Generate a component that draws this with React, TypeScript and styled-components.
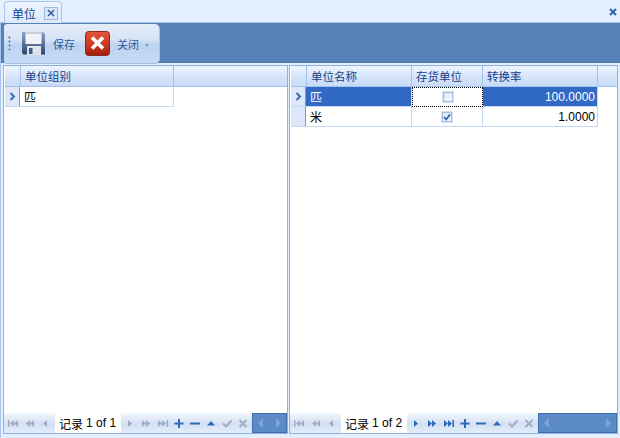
import React from "react";
import styled, { createGlobalStyle } from "styled-components";

const Global = createGlobalStyle`
  html, body { margin: 0; padding: 0; width: 620px; height: 438px; overflow: hidden; background: #e3efff; }
  body { font-family: "Liberation Sans", "Noto Sans CJK SC", sans-serif; font-size: 12px; color: #000; }
  * { box-sizing: border-box; }
`;

const Page = styled.div`
  width: 620px; height: 438px; display: flex; flex-direction: column; background: #e3efff;
`;
const TabStrip = styled.div`
  height: 23px; display: flex; align-items: flex-end; justify-content: space-between;
  padding: 0 3px 0 4px; background: #e4efff; border-bottom: 1px solid #a9c6ec;
`;
const Tab = styled.div`
  width: 58px; height: 22px; margin-bottom: -1px; display: flex; align-items: center; gap: 8px; padding: 1px 0 0 7px;
  border: 1px solid #a9c6ec; border-bottom: none; border-radius: 4px 4px 0 0;
  background: linear-gradient(#edf4ff, #dde9fb); color: #15428b; position: relative;
`;
const TabClose = styled.div`
  width: 14px; height: 13px; border: 1px solid #9db9dd; background: #dbe7f8;
  display: flex; align-items: center; justify-content: center;
`;
const StripClose = styled.div`
  width: 8px; height: 8px; margin-bottom: 6px; display: flex;
`;
const Body = styled.div`
  flex: 1; display: flex; flex-direction: column; padding: 0 2px 4px 2px; border-left: 1px solid #a9c6ec; min-height: 0;
`;
const Band = styled.div`
  height: 40px; margin: 0 -2px 0 -2px; padding: 1px 0 0 3px; background: #5680b8; border-bottom: 1px solid #4c75ac;
  display: flex;
`;
const ToolBar = styled.div`
  width: 156px; height: 40px; border-radius: 3px 5px 5px 3px; display: flex; align-items: center;
  background: linear-gradient(#e4edf9 0%, #d6e3f6 40%, #bdd3f0 55%, #c9dcf6 100%);
  border-right: 1px solid #a9c3e6; border-bottom: 1px solid #9ebde4; position: relative; z-index: 1;
`;
const Grip = styled.div`
  width: 3px; height: 15px; margin: 0 10px 0 4px;
  background: radial-gradient(circle at 1.5px 1.5px, #7f9cc6 1.2px, transparent 1.4px) 0 0 / 3px 4px repeat-y;
`;
const ToolLabel = styled.span<{ $w: number; $pad: number }>`
  color: #2b5a99; width: ${p => p.$w}px; padding-left: ${p => p.$pad}px; font-size: 11px; white-space: nowrap;
`;
const Arrow = styled.div`
  width: 0; height: 0; margin-top: 3px; border-left: 2.5px solid transparent; border-right: 2.5px solid transparent;
  border-top: 3px solid #7f9cc6;
`;
const Panes = styled.div`
  flex: 1; display: flex; min-height: 0; padding-top: 2px; gap: 1px;
`;
const Pane = styled.div<{ $w: number }>`
  width: ${p => p.$w}px; display: flex; flex-direction: column; border: 1px solid #8fb2df; background: #fff;
`;
const Grid = styled.div`
  flex: 1; display: flex; flex-direction: column; padding: 0 0 0 1px; min-height: 0;
`;
const Row = styled.div`
  display: flex; height: 20px;
`;
const HeadRow = styled(Row)`
  height: 21px; background: linear-gradient(#eef5ff, #d5e4fa 55%, #c8dbf7);
  border-bottom: 1px solid #a5c3ea;
`;
const HeadCell = styled.div<{ $w?: number }>`
  ${p => (p.$w ? `width:${p.$w}px;` : "flex:1;")}
  padding: 0 0 0 4px; border-right: 1px solid #a5c3ea; display: flex; align-items: center; color: #15428b; font-size: 11.5px;
  &:last-child { border-right: none; }
`;
const Indicator = styled.div`
  width: 15px; flex: none; border-right: 1px solid #7f9db9; border-bottom: 1px solid #c6d9f3;
  background: #dce8f9; display: flex; align-items: center; justify-content: center;
`;
const Cell = styled.div<{ $w: number; $sel?: boolean; $right?: boolean }>`
  width: ${p => p.$w}px; flex: none; display: flex; align-items: center;
  justify-content: ${p => (p.$right ? "flex-end" : "flex-start")};
  padding: ${p => (p.$right ? "0 2px 0 0" : "0 0 0 4px")};
  font-size: 12px;
  background: ${p => (p.$sel ? "#316ac5" : "#fff")};
  color: ${p => (p.$sel ? "#fff" : "#000")};
  border-right: 1px solid #c6d9f3; border-bottom: 1px solid #c6d9f3;
`;
const CheckCell = styled(Cell)<{ $focus?: boolean }>`
  justify-content: center; padding: 0;
  ${p => (p.$focus ? "border: 1px dotted #000;" : "")}
`;
const Box = styled.div`
  width: 12px; height: 12px; border: 2px solid #a3bde2; outline: 1px solid #d5e2f5; outline-offset: -1px;
  background: linear-gradient(135deg, #dbe6f6, #f6f9ff);
  display: flex; align-items: center; justify-content: center;
`;
const Spacer = styled.div` flex: 1; background: #fff; `;
const Navigator = styled.div`
  height: 20px; flex: none; display: flex; align-items: stretch;
  background: linear-gradient(#f3f7fd, #d3e0f3 55%, #e4edf9);
`;
const NavButtons = styled.div`
  display: flex; align-items: center; padding-left: 1px;
`;
const NavBtn = styled.div`
  width: 16.2px; height: 100%; display: flex; align-items: center; justify-content: center;
`;
const Rec = styled.div`
  width: 66px; background: #fff; margin: 0 1px; display: flex; align-items: center; justify-content: center;
  font-size: 12px; white-space: nowrap; gap: 3px; color: #000;
`;
const Scroll = styled.div`
  flex: 1; background: #5c8ac6; border: 1px solid #3f6fab;
  display: flex; align-items: center; justify-content: space-between; padding: 0 5px;
`;

type Kind = "first" | "prev2" | "prev" | "next" | "next2" | "last" | "plus" | "minus" | "up" | "check" | "x";
const Ic = ({ k, c }: { k: Kind; c: string }) => {
  const tri = (x: number, dir: number) =>
    dir > 0 ? `M${x} 1 L${x + 4} 4.5 L${x} 8Z` : `M${x} 1 L${x - 4} 4.5 L${x} 8Z`;
  let el: React.ReactNode = null;
  if (k === "first") el = <path d={`M0 1h1.5v7H0Z ${tri(6, -1)} ${tri(10, -1)}`} fill={c} />;
  if (k === "prev2") el = <path d={`${tri(6, -1)} ${tri(10, -1)}`} fill={c} />;
  if (k === "prev") el = <path d={tri(7, -1)} fill={c} />;
  if (k === "next") el = <path d={tri(3, 1)} fill={c} />;
  if (k === "next2") el = <path d={`${tri(1, 1)} ${tri(5, 1)}`} fill={c} />;
  if (k === "last") el = <path d={`${tri(0, 1)} ${tri(4, 1)} M8.5 1H10v7H8.5Z`} fill={c} />;
  if (k === "plus") el = <path d="M4 0h2v3.5h3.5v2H6V9H4V5.500H.5v-2H4Z" fill={c} />;
  if (k === "minus") el = <path d="M0 3.500h10v2H0Z" fill={c} />;
  if (k === "up") el = <path d="M5 2l4 4.500H1Z" fill={c} />;
  if (k === "check") el = <path d="M1 4.500l3 3L9.500 1.500" fill="none" stroke={c} strokeWidth="2" />;
  if (k === "x") el = <path d="M1.500 1l7 7M8.500 1l-7 7" fill="none" stroke={c} strokeWidth="2" />;
  return <svg width="11" height="9" viewBox="0 0 11 9">{el}</svg>;
};

const OFF = "#a0aec4";
const ON = "#2f6ab5";

const Nav = ({ cur, total, active }: { cur: number; total: number; active: boolean }) => (
  <Navigator>
    <NavButtons>
      {(["first", "prev2", "prev"] as Kind[]).map(k => <NavBtn key={k}><Ic k={k} c={OFF} /></NavBtn>)}
    </NavButtons>
    <Rec><span>记录</span><span>{cur} of {total}</span></Rec>
    <NavButtons>
      {(["next", "next2", "last"] as Kind[]).map(k => <NavBtn key={k}><Ic k={k} c={active ? ON : OFF} /></NavBtn>)}
      {(["plus", "minus", "up"] as Kind[]).map(k => <NavBtn key={k}><Ic k={k} c={ON} /></NavBtn>)}
      {(["check", "x"] as Kind[]).map(k => <NavBtn key={k}><Ic k={k} c={OFF} /></NavBtn>)}
    </NavButtons>
    <Scroll>
      <svg width="5" height="10" viewBox="0 0 5 10"><path d="M5 0v10L0 5Z" fill="#7ea6d8" /></svg>
      <svg width="5" height="10" viewBox="0 0 5 10"><path d="M0 0v10l5-5Z" fill="#7ea6d8" /></svg>
    </Scroll>
  </Navigator>
);

const Chevron = () => (
  <svg width="7" height="9" viewBox="0 0 7 9"><path d="M1.500 1l3.500 3.500L1.500 8" fill="none" stroke="#3d6ea8" strokeWidth="2" /></svg>
);
const Tick = () => (
  <svg width="8" height="8" viewBox="0 0 9 9"><path d="M1 4.500l2.600 2.800L8 1.500" fill="none" stroke="#2f5f9f" strokeWidth="2" /></svg>
);
const CloseX = ({ s, c, w }: { s: number; c: string; w: number }) => (
  <svg width={s} height={s} viewBox="0 0 8 8"><path d="M1 1l6 6M7 1L1 7" stroke={c} strokeWidth={w} fill="none" /></svg>
);
const SaveIcon = () => (
  <svg width="25" height="25" viewBox="0 0 25 25">
    <defs>
      <linearGradient id="fl" x1="0" y1="0" x2="0" y2="1">
        <stop offset="0" stopColor="#8aa3cf" /><stop offset="1" stopColor="#31456f" />
      </linearGradient>
    </defs>
    <path d="M1 1h21l2 2v20.500H2.500L1 22Z" fill="url(#fl)" />
    <rect x="4.500" y="1" width="16" height="12" fill="#f2f3f6" />
    <rect x="4.500" y="1" width="16" height="2" fill="#c9cdd8" />
    <rect x="6" y="15" width="14" height="9" fill="#dfe3ea" />
    <rect x="8" y="17" width="3.500" height="6" fill="#3e5a92" />
  </svg>
);
const CloseIcon = () => (
  <svg width="25" height="25" viewBox="0 0 25 25">
    <defs>
      <linearGradient id="rd" x1="0" y1="0" x2="0" y2="1">
        <stop offset="0" stopColor="#e4573d" /><stop offset=".5" stopColor="#cf3a20" /><stop offset="1" stopColor="#a31d0c" />
      </linearGradient>
    </defs>
    <rect x=".5" y=".5" width="24" height="24" rx="3" fill="url(#rd)" stroke="#8c2a18" />
    <path d="M7 6.500l11 11M18 6.500l-11 11" stroke="#fff" strokeWidth="3.600" fill="none" />
  </svg>
);

export default function App() {
  return (
    <Page>
      <Global />
      <TabStrip>
        <Tab>
          <span>单位</span>
          <TabClose><CloseX s={8} c="#2b5a99" w={1.5} /></TabClose>
        </Tab>
        <StripClose><CloseX s={8} c="#2f62ad" w={2} /></StripClose>
      </TabStrip>
      <Body>
        <Band>
          <ToolBar>
            <Grip />
            <SaveIcon />
            <ToolLabel $w={39} $pad={7}>保存</ToolLabel>
            <CloseIcon />
            <ToolLabel $w={35} $pad={7}>关闭</ToolLabel>
            <Arrow />
          </ToolBar>
        </Band>
        <Panes>
          <Pane $w={285}>
            <Grid>
              <HeadRow>
                <HeadCell $w={16} />
                <HeadCell $w={153}>单位组别</HeadCell>
                <HeadCell />
              </HeadRow>
              <Row>
                <Indicator><Chevron /></Indicator>
                <Cell $w={154}>匹</Cell>
                <Spacer />
              </Row>
            </Grid>
            <Nav cur={1} total={1} active={false} />
          </Pane>
          <Pane $w={329}>
            <Grid>
              <HeadRow>
                <HeadCell $w={16} />
                <HeadCell $w={105}>单位名称</HeadCell>
                <HeadCell $w={71}>存货单位</HeadCell>
                <HeadCell $w={115}>转换率</HeadCell>
                <HeadCell />
              </HeadRow>
              <Row>
                <Indicator><Chevron /></Indicator>
                <Cell $w={106} $sel>匹</Cell>
                <CheckCell $w={71} $focus><Box /></CheckCell>
                <Cell $w={115} $sel $right>100.0000</Cell>
                <Spacer />
              </Row>
              <Row>
                <Indicator />
                <Cell $w={106}>米</Cell>
                <CheckCell $w={71}><Box><Tick /></Box></CheckCell>
                <Cell $w={115} $right>1.0000</Cell>
                <Spacer />
              </Row>
            </Grid>
            <Nav cur={1} total={2} active />
          </Pane>
        </Panes>
      </Body>
    </Page>
  );
}
